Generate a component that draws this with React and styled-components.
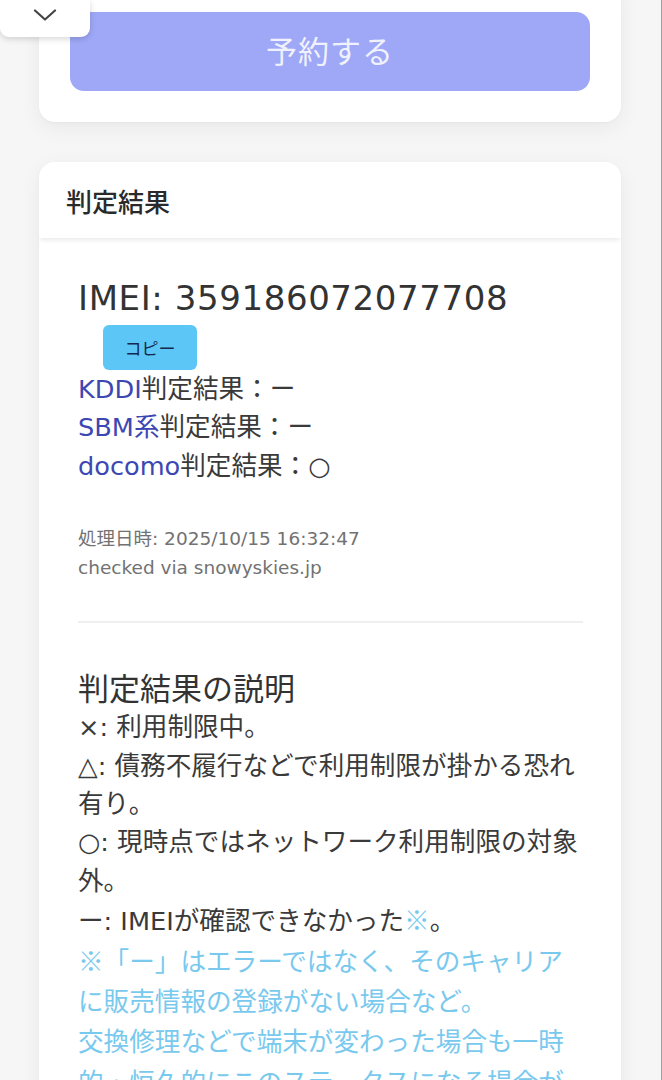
import React from "react";
import styled, { createGlobalStyle } from "styled-components";

const GlobalStyle = createGlobalStyle`
  html, body {
    margin: 0;
    padding: 0;
    background: #f6f6f7;
    overflow: hidden;
  }
  body {
    font-family: "DejaVu Sans", "Noto Sans CJK JP", sans-serif;
    color: #333;
  }
  * { box-sizing: border-box; }
`;

const Page = styled.div`
  width: 662px;
  height: 1080px;
  overflow: hidden;
  padding: 0 40px 0 39px;
  border-right: 1px solid #a0a0a0;
  background: #f6f6f7;
`;

const Card = styled.section`
  background: #fff;
  border-radius: 16px;
  box-shadow: 0 6px 22px rgba(0, 0, 0, 0.06), 0 1px 3px rgba(0, 0, 0, 0.03);
`;

const ReserveCard = styled(Card)`
  margin-top: -19px;
  padding: 31px;
`;

const ReserveButton = styled.button`
  display: flex;
  align-items: center;
  justify-content: center;
  width: 100%;
  height: 79px;
  padding: 0 0 5px;
  border: none;
  border-radius: 14px;
  background: #9ea8f6;
  color: rgba(255, 255, 255, 0.86);
  font-family: "Noto Sans CJK JP", sans-serif;
  font-size: 31px;
  letter-spacing: 1px;
`;

const ResultCard = styled(Card)`
  margin-top: 40px;
  overflow: hidden;
`;

const CardHeader = styled.header`
  position: relative;
  z-index: 1;
  height: 76px;
  display: flex;
  align-items: center;
  padding: 0 27px;
  background: #fff;
  font-family: "Noto Sans CJK JP", sans-serif;
  font-size: 26px;
  font-weight: 500;
  color: #2a2a2a;
  box-shadow: 0 3px 5px -1px rgba(0, 0, 0, 0.09);
`;

const CardBody = styled.div`
  padding: 33px 38px 40px 39px;
`;

const Imei = styled.div`
  font-size: 34px;
  line-height: 54px;
  letter-spacing: 0.6px;
  color: #333;
  white-space: nowrap;
`;

const CopyButton = styled.button`
  display: block;
  margin-left: 25px;
  width: 94px;
  height: 45px;
  border: none;
  border-radius: 6px;
  background: #5cc6f6;
  color: #16284f;
  font-family: "Noto Sans CJK JP", sans-serif;
  font-size: 17px;
`;

const ResultLine = styled.div`
  font-size: 25.6px;
  line-height: 38.4px;
  color: #3a3a3a;
  white-space: nowrap;
`;

const Carrier = styled.span`
  color: #3d47b2;
`;

const Meta = styled.div`
  margin-top: 39px;
  font-size: 18.5px;
  line-height: 29px;
  color: #727272;
`;

const Divider = styled.hr`
  margin: 39px 0 0;
  height: 2px;
  border: none;
  background: #efefef;
`;

const ExplainTitle = styled.h2`
  margin: 45px 0 3px;
  font-family: "Noto Sans CJK JP", sans-serif;
  font-size: 31px;
  line-height: 37px;
  font-weight: 400;
  color: #333;
`;

const Explain = styled.p`
  margin: 0;
  font-size: 25.6px;
  line-height: 38.4px;
  color: #3a3a3a;
`;

const Note = styled.span`
  font-family: "Noto Sans CJK JP", sans-serif;
  color: #79c9ee;
`;

const CollapseTab = styled.div`
  position: fixed;
  top: 0;
  left: 0;
  width: 90px;
  height: 37px;
  display: flex;
  justify-content: center;
  padding-top: 9px;
  background: #fff;
  border-radius: 0 0 9px 9px;
  box-shadow: 0 2px 6px rgba(0, 0, 0, 0.16);
`;

const Chevron = () => (
  <svg width="24" height="12" viewBox="0 0 24 12" fill="none">
    <polyline
      points="2,1.5 12,10.5 22,1.5"
      stroke="#454545"
      strokeWidth="2.2"
      strokeLinecap="round"
      strokeLinejoin="round"
    />
  </svg>
);

export default function App() {
  return (
    <>
      <GlobalStyle />
      <Page>
        <ReserveCard>
          <ReserveButton>予約する</ReserveButton>
        </ReserveCard>

        <ResultCard>
          <CardHeader>判定結果</CardHeader>
          <CardBody>
            <Imei>IMEI: 359186072077708</Imei>
            <CopyButton>コピー</CopyButton>
            <ResultLine>
              <Carrier>KDDI</Carrier>判定結果：ー
            </ResultLine>
            <ResultLine>
              <Carrier>SBM系</Carrier>判定結果：ー
            </ResultLine>
            <ResultLine>
              <Carrier>docomo</Carrier>判定結果：○
            </ResultLine>

            <Meta>
              処理日時: 2025/10/15 16:32:47
              <br />
              checked via snowyskies.jp
            </Meta>

            <Divider />

            <ExplainTitle>判定結果の説明</ExplainTitle>
            <Explain>
              ×: 利用制限中。
              <br />
              △: 債務不履行などで利用制限が掛かる恐れ有り。
              <br />
              ○: 現時点ではネットワーク利用制限の対象外。
              <br />
              ー: IMEIが確認できなかった<Note>※</Note>。
              <br />
              <Note>
                ※「ー」はエラーではなく、そのキャリアに販売情報の登録がない場合など。
                <br />
                交換修理などで端末が変わった場合も一時的・恒久的にこのステータスになる場合があります。
              </Note>
            </Explain>
          </CardBody>
        </ResultCard>
      </Page>
      <CollapseTab>
        <Chevron />
      </CollapseTab>
    </>
  );
}
